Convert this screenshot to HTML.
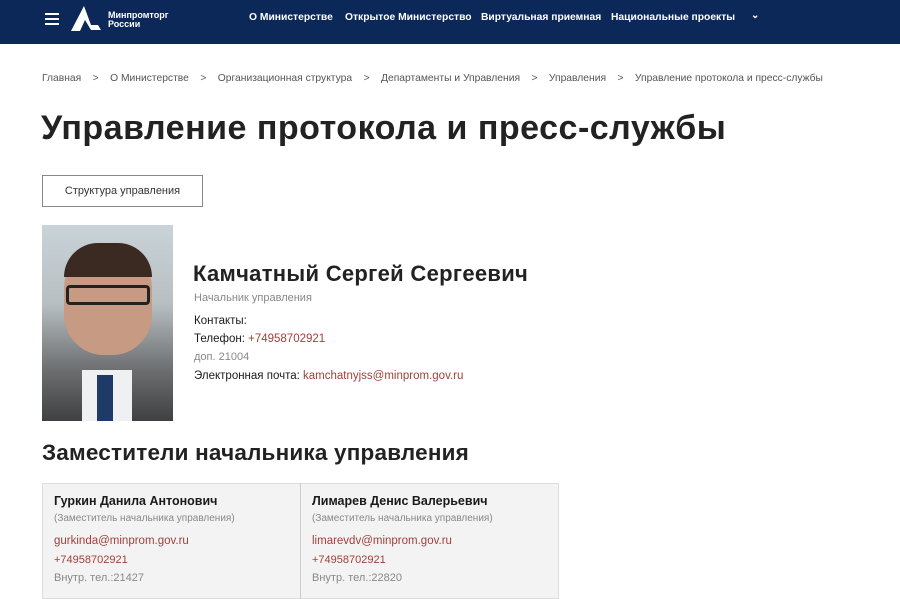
<!DOCTYPE html>
<html><head><meta charset="utf-8"><style>
*{margin:0;padding:0;box-sizing:border-box}
body{width:900px;height:599px;overflow:hidden;background:#fff;font-family:"Liberation Sans",sans-serif;color:#1a1a1a;position:relative}
.hdr{position:absolute;left:0;top:0;width:900px;height:44px;background:#0b2859}
.nav{position:absolute;top:12px;font-size:10.3px;color:#fff;font-weight:bold}
.abs{position:absolute;white-space:nowrap}
.bc{top:73px;font-size:10.3px;color:#555}
.red{color:#a0403a}
.gray{color:#888}
</style></head><body>
<div class="hdr">
 <div class="abs" style="left:45px;top:13px;width:14px;height:2px;background:#fff"></div>
 <div class="abs" style="left:45px;top:18px;width:14px;height:2px;background:#fff"></div>
 <div class="abs" style="left:45px;top:23px;width:14px;height:2px;background:#fff"></div>
 <svg class="abs" style="left:71px;top:6px" width="30" height="26" viewBox="0 0 30 26"><path d="M13 0 L0 25 L9 25 L14 14 L20 24 L30 24 L27 19 L20 19 Z" fill="#fff"/></svg>
 <div class="abs" style="left:108px;top:11px;font-size:9px;line-height:9px;color:#fff;font-weight:bold">Минпромторг<br>России</div>
 <div class="nav abs" style="left:249px">О Министерстве</div>
 <div class="nav abs" style="left:345px">Открытое Министерство</div>
 <div class="nav abs" style="left:481px">Виртуальная приемная</div>
 <div class="nav abs" style="left:611px">Национальные проекты</div>
 <div class="nav abs" style="left:751px;top:10px;font-size:10px">&#8964;</div>
</div>
<div class="abs bc" style="left:42px">Главная &nbsp;&nbsp;&nbsp;&gt;&nbsp;&nbsp;&nbsp; О Министерстве &nbsp;&nbsp;&nbsp;&gt;&nbsp;&nbsp;&nbsp; Организационная структура &nbsp;&nbsp;&nbsp;&gt;&nbsp;&nbsp;&nbsp; Департаменты и Управления &nbsp;&nbsp;&nbsp;&gt;&nbsp;&nbsp;&nbsp; Управления &nbsp;&nbsp;&nbsp;&gt;&nbsp;&nbsp;&nbsp; Управление протокола и пресс-службы</div>
<div class="abs" style="left:41px;top:109px;font-size:34px;font-weight:bold;color:#222;letter-spacing:0.5px">Управление протокола и пресс-службы</div>
<div class="abs" style="left:42px;top:175px;width:161px;height:32px;border:1px solid #888;font-size:11px;color:#333;text-align:center;line-height:30px">Структура управления</div>
<div class="abs" style="left:42px;top:225px;width:131px;height:196px;background:linear-gradient(180deg,#c9d3d8 0%,#b8bfc2 40%,#6a6c6e 75%,#3e4042 100%)">
 <div class="abs" style="left:22px;top:20px;width:88px;height:110px;border-radius:44px 44px 40px 40px;background:#c79a83"></div>
 <div class="abs" style="left:22px;top:18px;width:88px;height:34px;border-radius:44px 44px 0 0;background:#3a2a22"></div>
 <div class="abs" style="left:24px;top:60px;width:84px;height:20px;border:3px solid #222;border-radius:4px"></div>
 <div class="abs" style="left:40px;top:145px;width:50px;height:51px;background:#eef0f2"></div>
 <div class="abs" style="left:55px;top:150px;width:16px;height:46px;background:#1f3a66"></div>
</div>
<div class="abs" style="left:193px;top:261px;font-size:22px;font-weight:bold;color:#222;letter-spacing:0.3px">Камчатный Сергей Сергеевич</div>
<div class="abs gray" style="left:194px;top:292px;font-size:11px">Начальник управления</div>
<div class="abs" style="left:194px;top:315px;font-size:11.5px">Контакты:</div>
<div class="abs" style="left:194px;top:333px;font-size:11.5px">Телефон: <span class="red">+74958702921</span></div>
<div class="abs gray" style="left:194px;top:351px;font-size:11px">доп. 21004</div>
<div class="abs" style="left:194px;top:370px;font-size:11.5px">Электронная почта: <span class="red">kamchatnyjss@minprom.gov.ru</span></div>
<div class="abs" style="left:42px;top:440px;font-size:22.5px;font-weight:bold;color:#222;letter-spacing:0.2px">Заместители начальника управления</div>
<div class="abs" style="left:42px;top:483px;width:517px;height:116px;background:#f3f3f3;border:1px solid #ddd"></div>
<div class="abs" style="left:300px;top:483px;width:1px;height:116px;background:#ccc"></div>
<div class="abs" style="left:54px;top:494px;font-size:12.5px;font-weight:bold">Гуркин Данила Антонович</div>
<div class="abs gray" style="left:54px;top:513px;font-size:10px">(Заместитель начальника управления)</div>
<div class="abs red" style="left:54px;top:535px;font-size:11.5px">gurkinda@minprom.gov.ru</div>
<div class="abs red" style="left:54px;top:554px;font-size:11px">+74958702921</div>
<div class="abs gray" style="left:54px;top:572px;font-size:11px">Внутр. тел.:21427</div>
<div class="abs" style="left:312px;top:494px;font-size:12.5px;font-weight:bold">Лимарев Денис Валерьевич</div>
<div class="abs gray" style="left:312px;top:513px;font-size:10px">(Заместитель начальника управления)</div>
<div class="abs red" style="left:312px;top:535px;font-size:11.5px">limarevdv@minprom.gov.ru</div>
<div class="abs red" style="left:312px;top:554px;font-size:11px">+74958702921</div>
<div class="abs gray" style="left:312px;top:572px;font-size:11px">Внутр. тел.:22820</div>
</body></html>
